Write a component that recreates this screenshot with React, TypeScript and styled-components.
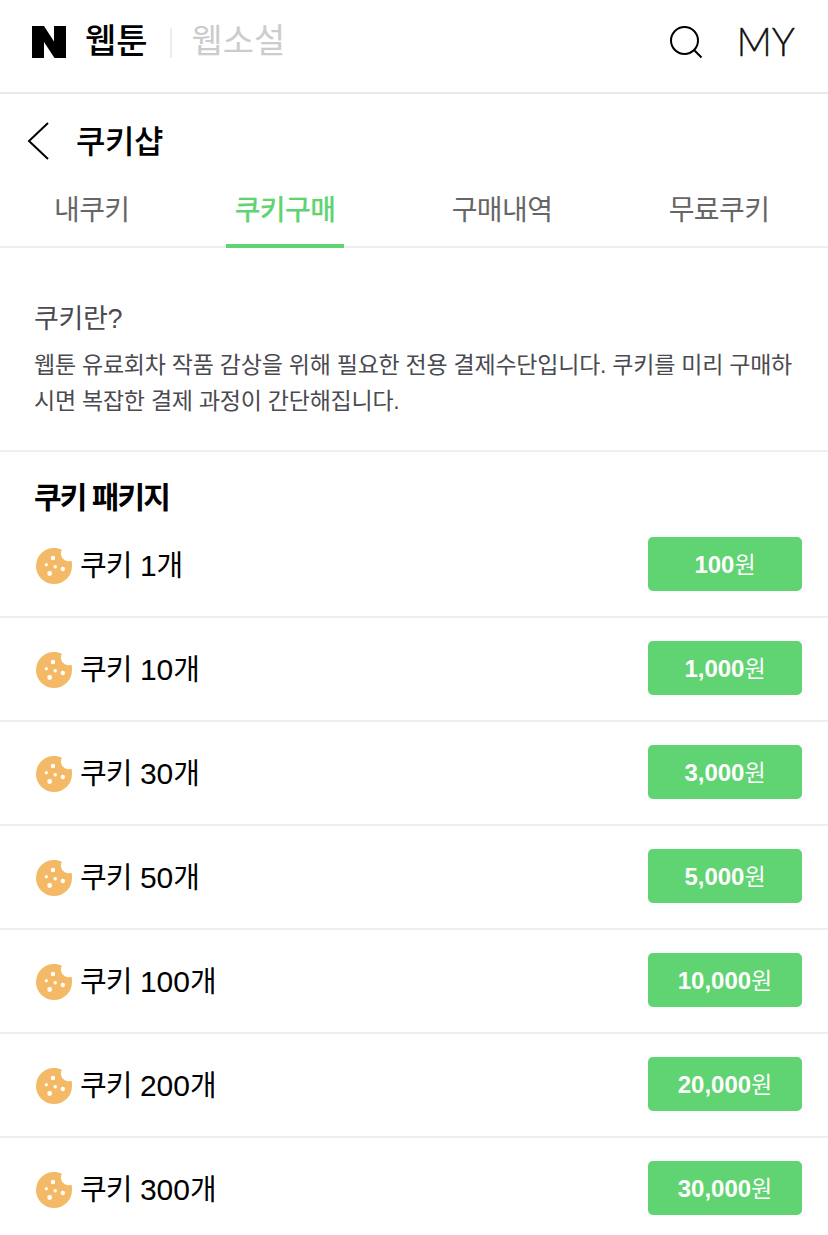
import React from "react";
import styled, { createGlobalStyle } from "styled-components";

const GREEN = "#60d372";

const GlobalStyle = createGlobalStyle`
  * { box-sizing: border-box; }
  html, body { margin: 0; padding: 0; background: #fff; }
  body {
    font-family: "Liberation Sans", "Noto Sans CJK KR", sans-serif;
    color: #000;
    overflow: hidden;
  }
`;

const Page = styled.div`
  width: 828px;
  height: 1235px;
  overflow: hidden;
  background: #fff;
`;

const Header = styled.header`
  display: flex;
  align-items: center;
  height: 94px;
  padding: 0 33px 8px 32px;
  border-bottom: 2px solid #e9e9e9;
`;

const Service = styled.a<{ $muted?: boolean }>`
  font-family: "Noto Sans CJK KR", sans-serif;
  font-size: 34px;
  line-height: 40px;
  white-space: nowrap;
  font-weight: ${(p) => (p.$muted ? 400 : 500)};
  color: ${(p) => (p.$muted ? "#cccccc" : "#000")};
  margin-left: ${(p) => (p.$muted ? "20px" : "19px")};
  margin-bottom: 6px;
`;

const Divider = styled.span`
  width: 2px;
  height: 30px;
  margin: 2px 0 0 22px;
  background: #ececec;
`;

const Actions = styled.div`
  display: flex;
  align-items: center;
  margin-left: auto;
  gap: 33px;
`;

const My = styled.a`
  font-family: Lato, sans-serif;
  font-weight: 300;
  font-size: 39px;
  line-height: 40px;
  color: #111;
  margin-bottom: 2px;
  -webkit-text-stroke: 0.3px #111;
`;

const TitleBar = styled.div`
  display: flex;
  align-items: center;
  height: 94px;
  padding: 0 0 0 27px;
`;

const Title = styled.h1`
  margin: 0 0 4px 26px;
  font-family: "Noto Sans CJK KR", sans-serif;
  font-weight: 500;
  font-size: 32px;
  line-height: 40px;
  letter-spacing: -0.5px;
`;

const Tabs = styled.nav`
  display: grid;
  grid-template-columns: 91px 118px 118px 118px;
  column-gap: 99px;
  height: 60px;
  padding-left: 36px;
  border-bottom: 2px solid #eeeff0;
`;

const Tab = styled.a<{ $active?: boolean; $first?: boolean }>`
  font-family: "Noto Sans CJK KR", sans-serif;
  font-size: 28px;
  line-height: 40px;
  letter-spacing: -0.6px;
  height: 60px;
  text-align: center;
  white-space: nowrap;
  padding-left: ${(p) => (p.$first ? "18px" : "0")};
  color: ${(p) => (p.$active ? GREEN : "#666")};
  font-weight: ${(p) => (p.$active ? 500 : 400)};
  border-bottom: 4px solid ${(p) => (p.$active ? GREEN : "transparent")};
`;

const Info = styled.section`
  height: 204px;
  padding: 51px 0 0 34px;
  color: #4b4a50;
  border-bottom: 2px solid #eeeff0;
`;

const InfoTitle = styled.h2`
  margin: 0;
  font-weight: 400;
  font-size: 27px;
  line-height: 40px;
  letter-spacing: -0.3px;
`;

const InfoText = styled.p`
  margin: 8px 0 0;
  font-size: 23px;
  line-height: 36px;
  letter-spacing: -0.24px;
  white-space: nowrap;
`;

const PackageTitle = styled.h2`
  margin: 0;
  height: 62px;
  padding: 21px 0 0 34px;
  font-family: "Noto Sans CJK KR", sans-serif;
  font-weight: 700;
  font-size: 30px;
  line-height: 44px;
  letter-spacing: -1.9px;
  word-spacing: 1.5px;
`;

const List = styled.ul`
  margin: 0;
  padding: 0;
  list-style: none;
`;

const Row = styled.li`
  display: flex;
  align-items: flex-start;
  height: 104px;
  padding: 23px 26px 0 36px;
  border-bottom: 2px solid #eeeff0;
`;

const CookieSvg = styled.svg`
  margin: 11px 8px 0 0;
`;

const Label = styled.span`
  font-size: 30px;
  line-height: 54px;
  padding-top: 2px;
  white-space: nowrap;
`;

const Hangul = styled.span`
  font-size: 29px;
  letter-spacing: -0.9px;
`;

const Price = styled.button`
  width: 154px;
  height: 54px;
  margin-left: auto;
  padding: 1px 0 0;
  border: 0;
  border-radius: 5px;
  background: ${GREEN};
  color: #fff;
  font-family: inherit;
  font-size: 23px;
  line-height: 53px;
  font-weight: 400;
`;

const Amount = styled.b`
  font-weight: 700;
  font-size: 24px;
`;

const CookieIcon = () => (
  <CookieSvg width="36" height="36" viewBox="0 0 36 36">
    <path
      fill="#f4b966"
      d="M18 0C21 0 23.600.6 25.800 1.700C24.700 3.600 24.600 6.300 25.500 8.500C27 12 31.300 14.200 35.600 12.800C35.900 14.400 36 16.200 36 18A18 18 0 1 1 18 0z"
    />
    <g fill="#fff">
      <circle cx="17" cy="10" r="2.200" />
      <circle cx="10.300" cy="16.700" r="1.600" />
      <circle cx="19.200" cy="18.800" r="1.700" />
      <circle cx="26.800" cy="21" r="2.200" />
      <circle cx="13.700" cy="25.500" r="2.400" />
    </g>
  </CookieSvg>
);

const packages: [string, string][] = [
  ["1", "100"],
  ["10", "1,000"],
  ["30", "3,000"],
  ["50", "5,000"],
  ["100", "10,000"],
  ["200", "20,000"],
  ["300", "30,000"],
];

export default function App() {
  return (
    <Page>
      <GlobalStyle />
      <Header>
        <svg width="34" height="32" viewBox="0 0 34 32">
          <path d="M0 0H12L22 15.500V0H34V32H22.500L12 16V32H0Z" />
        </svg>
        <Service>웹툰</Service>
        <Divider />
        <Service $muted>웹소설</Service>
        <Actions>
          <svg width="34" height="34" viewBox="0 0 34 34" fill="none" stroke="#000" strokeWidth="2">
            <circle cx="15.500" cy="15.500" r="13.500" />
            <path d="M24.800 24.800L32.500 32.500" />
          </svg>
          <My>MY</My>
        </Actions>
      </Header>
      <TitleBar>
        <svg width="23" height="38" viewBox="0 0 23 38" fill="none" stroke="#000" strokeWidth="2">
          <path d="M21 1L2 19L21 37" />
        </svg>
        <Title>쿠키샵</Title>
      </TitleBar>
      <Tabs>
        <Tab $first>내쿠키</Tab>
        <Tab $active>쿠키구매</Tab>
        <Tab>구매내역</Tab>
        <Tab>무료쿠키</Tab>
      </Tabs>
      <Info>
        <InfoTitle>쿠키란?</InfoTitle>
        <InfoText>
          웹툰 유료회차 작품 감상을 위해 필요한 전용 결제수단입니다. 쿠키를 미리 구매하
          <br />
          시면 복잡한 결제 과정이 간단해집니다.
        </InfoText>
      </Info>
      <PackageTitle>쿠키 패키지</PackageTitle>
      <List>
        {packages.map(([count, price]) => (
          <Row key={count}>
            <CookieIcon />
            <Label>
              <Hangul>쿠키</Hangul> {count}
              <Hangul>개</Hangul>
            </Label>
            <Price>
              <Amount>{price}</Amount>원
            </Price>
          </Row>
        ))}
      </List>
    </Page>
  );
}
